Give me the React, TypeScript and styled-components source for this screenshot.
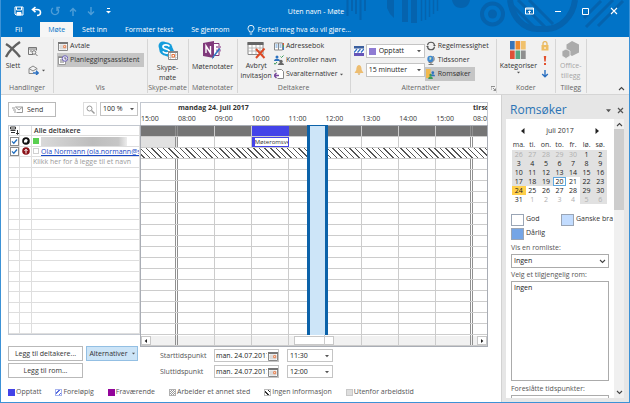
import React from "react";
import styled, { createGlobalStyle, css } from "styled-components";

const BLUE = "#0173c7";
const DARK = "#0563ae";
const LINE = "#cccccc";
const HATCH =
  "repeating-linear-gradient(45deg, #ffffff 0 2px, #555555 2px 3px, #ffffff 3px 4px)";

const GlobalStyle = createGlobalStyle`
  * { box-sizing: border-box; }
  body { margin: 0; font: 7px/10px "Open Sans", "Noto Sans", sans-serif; color: #333333; background: #ffffff; }
  button, input, select { font: inherit; color: inherit; margin: 0; padding: 0; border: 0; background: none; border-radius: 0; }
  button { white-space: nowrap; }
  svg { display: block; flex: none; }
`;

const Window = styled.div`
  display: flex;
  flex-direction: column;
  height: 100vh;
  overflow: hidden;
  border: solid #3d92d6;
  border-width: 0 1px 1px;
`;

/* ---------- title bar and tabs ---------- */

const Banner = styled.header`
  position: relative;
  flex: none;
  background: ${BLUE};
  color: #ffffff;
`;
const Pattern = styled.svg`
  position: absolute;
  top: 0;
  right: 0;
`;
const TitleBar = styled.div`
  position: relative;
  display: grid;
  grid-template-columns: 1fr auto 1fr;
  align-items: center;
  height: 22px;
  padding: 0 10px 0 12px;
`;
const QuickAccess = styled.div`
  display: flex;
  gap: 7px;
`;
const Caption = styled.h1`
  margin: 2px 0 0;
  font-size: 7px;
  font-weight: 400;
  line-height: 20px;
`;
const WindowButtons = styled.div`
  display: flex;
  justify-content: flex-end;
  gap: 17px;
`;
const BarButton = styled.button<{ $dim?: boolean }>`
  display: grid;
  place-items: center;
  width: 11px;
  height: 12px;
  opacity: ${(p) => (p.$dim ? 0.3 : 1)};
`;
const TabRow = styled.nav`
  position: relative;
  display: flex;
  height: 15px;
  padding-left: 5px;
`;
const Tab = styled.button<{ $active?: boolean }>`
  padding: 0 9px;
  line-height: 14px;
  ${(p) => p.$active && css`background: #f6f6f6; color: ${BLUE}; margin-left: 9px; padding: 0 8px;`}
`;
const TellMe = styled.button`
  display: flex;
  align-items: center;
  gap: 3px;
  margin-left: 8px;
`;

/* ---------- ribbon ---------- */

const Ribbon = styled.div`
  display: flex;
  flex: none;
  height: 58px;
  padding: 2px 0 0;
  background: #f1f1f1;
  border-bottom: 1px solid #d5d5d5;
`;
const Group = styled.section<{ $w: number }>`
  display: flex;
  flex-direction: column;
  flex: 0 0 ${(p) => p.$w}px;
  margin-bottom: 1px;
  border-right: 1px solid #d6d6d6;
`;
const GroupBody = styled.div<{ $gap?: number; $center?: boolean }>`
  display: flex;
  flex: 1;
  min-height: 0;
  gap: ${(p) => p.$gap ?? 0}px;
  justify-content: ${(p) => (p.$center ? "center" : "flex-start")};
  padding: 0 3px;
`;
const GroupName = styled.h2`
  display: flex;
  justify-content: center;
  margin: 0;
  font-size: 7px;
  font-weight: 400;
  line-height: 10px;
  color: #666666;
  white-space: nowrap;
`;
const GroupTitle = styled.span`
  flex: 1;
  text-align: center;
`;
const Stack = styled.div<{ $gap?: number; $top?: number }>`
  display: flex;
  flex-direction: column;
  align-items: flex-start;
  gap: ${(p) => p.$gap ?? 0}px;
  padding-top: ${(p) => p.$top ?? 0}px;
`;
const BigButton = styled.button<{ $dim?: boolean }>`
  display: flex;
  flex-direction: column;
  align-items: center;
  align-self: flex-start;
  padding-top: 2px;
  color: ${(p) => (p.$dim ? "#a6a6a6" : "#333333")};
  svg { margin-bottom: 2px; }
`;
const SmallButton = styled.button<{ $on?: boolean }>`
  display: flex;
  align-items: center;
  gap: 2px;
  height: 14px;
  padding: 0 4px 0 1px;
  background: ${(p) => (p.$on ? "#c5c5c5" : "transparent")};
`;
const IconButton = styled.button`
  display: flex;
  align-items: center;
  gap: 3px;
  height: 14px;
`;
const Labeled = styled.label`
  display: flex;
  align-items: center;
  gap: 2px;
`;
const Field = styled.span<{ $w: number; $h?: number }>`
  display: flex;
  align-items: center;
  gap: 3px;
  width: ${(p) => p.$w}px;
  height: ${(p) => p.$h ?? 14}px;
  padding: 0 3px 0 2px;
  background: #ffffff;
  border: 1px solid #c4c4c4;
  color: #222222;
`;
const DateField = styled(Field)`
  gap: 1px;
  padding: 0 0 0 1px;
`;
const Select = styled.select`
  flex: 1;
  min-width: 0;
  appearance: none;
  outline: 0;
`;
const Corner = styled.button`
  align-self: flex-end;
  margin: 0 4px 3px auto;
`;

/* ---------- body ---------- */

const Body = styled.main`
  display: flex;
  flex: 1;
  min-height: 0;
`;
const Planner = styled.section`
  display: flex;
  flex-direction: column;
  flex: 1;
  min-width: 0;
  padding: 7px 13px 5px 7px;
`;
const Schedule = styled.div`
  display: grid;
  grid-template-columns: 132px minmax(0, 1fr);
  grid-template-rows: 23px minmax(0, 1fr) 10px;
  flex: 1;
  min-height: 0;
`;
const Tools = styled.div`
  display: flex;
  align-items: flex-start;
  padding-right: 2px;
`;
const Button = styled.button<{ $w: number; $blue?: boolean }>`
  display: flex;
  align-items: center;
  justify-content: center;
  gap: 4px;
  width: ${(p) => p.$w}px;
  height: 15px;
  border: 1px solid ${(p) => (p.$blue ? "#93bfe3" : "#b9b9b9")};
  background: ${(p) => (p.$blue ? "#cce4f7" : "#ffffff")};
`;
const SendButton = styled(Button)`
  justify-content: flex-start;
  padding-left: 3px;
`;
const ZoomBox = styled.label`
  display: flex;
  gap: 3px;
  margin-left: auto;
`;
const Lens = styled.span`
  display: grid;
  place-items: center;
  width: 14px;
  height: 14px;
  border: 1px solid #dddddd;
`;
const Hours = styled.div`
  display: grid;
  grid-template-columns: 37fr repeat(8, 37fr) 14fr;
  grid-template-rows: 11px 11px;
  border: solid #c3c8d0;
  border-width: 1px 1px 0;
  overflow: hidden;
  white-space: nowrap;
  color: #333333;
`;
const Day = styled.strong<{ $from: number }>`
  grid-row: 1;
  grid-column: ${(p) => p.$from} / span ${(p) => (p.$from === 2 ? 5 : 1)};
  min-width: 0;
`;
const Hour = styled.span<{ $col: number }>`
  grid-row: 2;
  grid-column: ${(p) => p.$col};
  min-width: 0;
`;

const rows = css`
  display: grid;
  grid-template-rows: repeat(20, minmax(0, 1fr));
  border-spacing: 0;
  tbody { display: contents; }
  tr { display: grid; min-height: 0; border-bottom: 1px solid ${LINE}; }
  td, th { padding: 0; border-right: 1px solid ${LINE}; overflow: hidden; font-weight: 400; text-align: left; }
`;
const People = styled.table`
  ${rows}
  border: 1px solid #c3c8d0;
  border-right: 0;
  tr { grid-template-columns: 11px 12px minmax(0, 1fr); border-color: #dedede; }
  td, th { display: flex; align-items: center; justify-content: center; border-color: #dedede; white-space: nowrap; line-height: 9px; }
`;
const NameCell = styled.td`
  && { justify-content: flex-start; gap: 2px; padding-left: 1px; color: #9a9a9a; }
  a { color: #1646c4; }
`;
const HeadCell = styled.th`
  && { justify-content: flex-start; padding-left: 2px; font-weight: 600; color: #333333; }
`;
const Check = styled.input`
  appearance: none;
  width: 9px;
  height: 9px;
  border: 1px solid #8a8a8a;
  background: #ffffff;
  &:checked { background: #ffffff url("data:image/svg+xml,%3Csvg xmlns='http://www.w3.org/2000/svg' viewBox='0 0 7 7'%3E%3Cpath d='M1 3.4 2.8 5.2 6 1.5' fill='none' stroke='%23216fc0' stroke-width='1.3'/%3E%3C/svg%3E"); }
`;
const Presence = styled.i<{ $on?: boolean }>`
  flex: none;
  width: 6px;
  height: 6px;
  border: 1px solid ${(p) => (p.$on ? "#59cf50" : "#d0d0d0")};
  background: ${(p) => (p.$on ? "#59cf50" : "#ffffff")};
`;
const Redacted = styled.i`
  width: 86px;
  height: 9px;
  background: linear-gradient(90deg, #d9d9d9, #bdbdbd 60%, #c6c6c6 90%, #ededed);
`;
const Timeline = styled.div`
  position: relative;
  display: grid;
`;
const Slots = styled.table`
  ${rows}
  border: 1px solid #a9adb5;
  tr { grid-template-columns: 37fr repeat(8, 37fr) 14fr; }
  td:nth-child(1), td:nth-child(9) { border-right: 3px double #909090; }
  td:last-child { border-right: 0; }
`;
const SlotRow = styled.tr<{ $kind: string }>`
  ${(p) => p.$kind === "sum" && css`td { background: #757575; border-color: #cccccc; }`}
  ${(p) => p.$kind === "off" && css`td:first-child { background: #e1e1e1; }`}
  ${(p) => p.$kind === "none" && css`background: ${HATCH}; && td { border-color: transparent; }`}
`;
const Busy = styled.td`
  && { background: #4343e8; border-color: #4343e8; }
`;
const Booking = styled.td`
  && {
    border: 1px solid #4343e8;
    border-left-width: 3px;
    font-size: 6px;
    line-height: 8px;
    white-space: nowrap;
  }
`;
const Proposal = styled.div`
  position: absolute;
  top: 0;
  bottom: 0;
  left: 48%;
  width: 6%;
  border: solid #0b62a9;
  border-width: 1px 3px 0;
  background: #cde5f8;
`;
const Scroll = styled.div`
  grid-column: 2;
  display: flex;
  align-items: stretch;
  justify-content: space-between;
  margin: 1px 1px 0;
  background: #f1f1f1;
`;
const ScrollButton = styled.button<{ $w?: number }>`
  display: grid;
  place-items: center;
  width: ${(p) => p.$w ?? 10}px;
  background: #ffffff;
  border: 1px solid #c8c8c8;
`;
const Controls = styled.form`
  display: flex;
  align-items: flex-start;
  gap: 22px;
  margin-top: 1px;
`;
const ButtonGrid = styled.div`
  display: grid;
  grid-template-columns: 75px 52px;
  gap: 2px 3px;
`;
const Times = styled.div`
  display: grid;
  grid-template-columns: 47px 66px 46px;
  gap: 3px 7px;
  align-items: center;
  padding-top: 3px;
  label { white-space: nowrap; color: #555555; }
`;
const DateInput = styled.input`
  flex: 1;
  min-width: 0;
  outline: 0;
`;
const Legend = styled.ul`
  display: flex;
  gap: 14px;
  margin: 9px 0 0;
  padding: 0;
  list-style: none;
  color: #555555;
`;
const LegendItem = styled.li`
  display: flex;
  align-items: center;
  gap: 1px;
  white-space: nowrap;
`;
const Key = styled.i<{ $fill: string; $edge: string }>`
  width: 7px;
  height: 7px;
  border: 1px solid ${(p) => p.$edge};
  background: ${(p) => p.$fill};
`;

/* ---------- room finder ---------- */

const Pane = styled.aside`
  display: flex;
  flex-direction: column;
  flex: 0 0 128px;
  min-width: 0;
  padding: 0 5px 4px 4px;
  background: #e6e6e6;
  border-left: 1px solid #d2d2d2;
`;
const PaneHead = styled.div`
  display: flex;
  align-items: center;
  gap: 6px;
  height: 24px;
  padding: 6px 0 0 4px;
`;
const PaneTitle = styled.h2`
  flex: 1;
  margin: 0;
  font-size: 12px;
  font-weight: 400;
  line-height: 18px;
  color: #2b74b5;
`;
const PaneBody = styled.div`
  display: flex;
  flex: 1;
  min-height: 0;
  background: #ffffff;
`;
const PaneContent = styled.div`
  flex: 1;
  min-width: 0;
  overflow: hidden;
  padding: 7px 5px 0;
`;
const VScroll = styled.div`
  display: flex;
  flex-direction: column;
  align-items: center;
  width: 10px;
  padding: 3px 0;
  background: #f0f0f0;
`;
const Thumb = styled.div`
  width: 10px;
  height: 81px;
  margin: 2px 0 auto;
  background: #cdcdcd;
`;
const Month = styled.div`
  display: flex;
  align-items: center;
  justify-content: space-between;
  padding: 0 9px;
  color: #333333;
`;
const Calendar = styled.table`
  width: 95px;
  margin: 4px 0 0 1px;
  table-layout: fixed;
  border-collapse: collapse;
  color: #333333;
  text-align: center;
  th { padding: 0; font-weight: 400; line-height: 10px; }
`;
const Date = styled.td<{ $shade?: boolean; $dim?: boolean; $today?: boolean; $picked?: boolean }>`
  height: 9px;
  padding: 0;
  line-height: 9px;
  background: ${(p) => (p.$picked ? "#ffcf4a" : p.$shade ? "#e1e1e1" : "#ffffff")};
  color: ${(p) => (p.$dim ? "#b0b0b0" : "#222222")};
  outline: ${(p) => (p.$today ? "1px solid #5fa8e0" : "0")};
  outline-offset: -1px;
`;
const Quality = styled.div`
  display: grid;
  grid-template-columns: 50px 1fr;
  gap: 2px 0;
  margin: 10px 0 3px;
`;
const QualityItem = styled.span<{ $color: string }>`
  display: flex;
  gap: 2px;
  white-space: nowrap;
  &::before {
    content: "";
    width: 11px;
    height: 10px;
    border: 1px solid #9aa5b5;
    background: ${(p) => p.$color};
  }
`;
const PaneLabel = styled.label`
  display: block;
  margin-bottom: 1px;
  white-space: nowrap;
  color: #555555;
`;
const Combo = styled.span`
  display: flex;
  align-items: center;
  height: 14px;
  width: 98px;
  margin-bottom: 2px;
  padding: 0 2px;
  border: 1px solid #ababab;
  color: #222222;
`;
const RoomList = styled.select`
  display: block;
  width: 98px;
  height: 100px;
  margin-bottom: 3px;
  padding: 1px 2px;
  border: 1px solid #ababab;
  outline: 0;
  overflow: hidden;
  option { padding: 0; color: #222222; min-height: 10px; }
`;
const Suggestions = styled.div`
  width: 98px;
  height: 30px;
  border: 1px solid #ababab;
`;

/* ---------- icons ---------- */

const Caret = ({ size = 4, color = "#555" }) => (
  <svg width={size} height={size} viewBox="0 0 4 4"><path d="M0 1h4L2 3.3z" fill={color} /></svg>
);
const Chevron = ({ up = false }) => (
  <svg width="7" height="5" viewBox="0 0 7 5"><path d={up ? "M1 4l2.5-2.5L6 4" : "M1 1l2.5 2.5L6 1"} fill="none" stroke="#444" strokeWidth="1.1" /></svg>
);
const Arrow = ({ left = false, size = 6 }) => (
  <svg width={size} height={size} viewBox="0 0 6 6"><path d={left ? "M4.5 0v6L1 3z" : "M1.5 0v6L5 3z"} fill="#222" /></svg>
);
const CalendarIcon = ({ size = 10 }) => (
  <svg width={size} height={size} viewBox="0 0 10 10">
    <path d="M.5 1.5h9v8h-9z" fill="#fff" stroke="#888" /><path d="M0 1h10v2H0z" fill="#777" />
    <path d="M1 5h8M1 7h8M3 3v6M5 3v6M7 3v6" stroke="#bbb" strokeWidth=".6" />
    <path d="M5.700 4.700h2v2h-2z" fill="#fff" stroke="#e8743b" strokeWidth=".9" />
  </svg>
);

const quick = [
  <svg width="10" height="10" viewBox="0 0 10 10" fill="none" stroke="#fff"><path d="M1 1h8v8H2L1 8zM2.500 1v3h5V1" /><path d="M3 6.500h4V9H3z" fill="#fff" /></svg>,
  <svg width="11" height="11" viewBox="0 0 11 11" fill="none" stroke="#fff" strokeWidth="1.6"><path d="M4.500 1L1.500 3.500l3 2.700M1.500 3.500H6c2.500 0 3.500 1.500 3.500 3S8.500 9.500 6 9.500" /></svg>,
  <svg width="10" height="10" viewBox="0 0 10 10" fill="none" stroke="#fff" strokeWidth="1.400"><path d="M7 2a3.600 3.600 0 1 1-4 0M7 5V1.500h3" /></svg>,
  <svg width="8" height="9" viewBox="0 0 8 9" fill="none" stroke="#fff" strokeWidth="1.400"><path d="M4 9V1.500M1 4.500l3-3 3 3" /></svg>,
  <svg width="8" height="9" viewBox="0 0 8 9" fill="none" stroke="#fff" strokeWidth="1.400"><path d="M4 0v7.500M1 4.500l3 3 3-3" /></svg>,
  <svg width="5" height="6" viewBox="0 0 5 6"><path d="M1 .5h3" stroke="#fff" /><path d="M0 3h5L2.500 5.500z" fill="#fff" /></svg>,
];
const quickNames = ["Lagre", "Angre", "Gjør om", "Forrige", "Neste", "Tilpass"];
const winNames = ["Visningsalternativer for båndet", "Minimer", "Maksimer", "Lukk"];
const win = [
  <svg width="9" height="8" viewBox="0 0 9 8" fill="none" stroke="#fff"><path d="M.5 1h8v6h-8zM1 2h7M4.500 7V4M3 5.200L4.500 3.700 6 5.200" /></svg>,
  <svg width="8" height="8" viewBox="0 0 8 8"><path d="M1 4.500h6" stroke="#fff" /></svg>,
  <svg width="8" height="8" viewBox="0 0 8 8"><path d="M.5 1.500h6v6h-6z" fill="none" stroke="#fff" /></svg>,
  <svg width="8" height="8" viewBox="0 0 8 8"><path d="M1 1l6 6M7 1L1 7" stroke="#fff" strokeWidth="1.100" /></svg>,
];

const BannerPattern = () => (
  <Pattern width="290" height="37" viewBox="0 0 290 37" fill="none" stroke={DARK} aria-hidden="true">
    <path d="M8.500 0v16M13 0v11M17 0v14M21.500 0v20M26 0v11" strokeWidth="2" />
    <path d="M48 0h7v18l-4-4-3-6zM63 0h6v22h-6zM72 0h6v23h-6z" fill={DARK} stroke="none" />
    <path d="M82.500 0v21M86.500 0v20M90.500 0v17M94.500 0v14M98.500 0v11" strokeWidth="1.500" />
    <path d="M113 0h18c-1 5-4 8-9 8s-8-3-9-8z" fill={DARK} stroke="none" />
    <circle cx="153.500" cy="14" r="10.500" strokeWidth="4" /><circle cx="153.500" cy="14" r="4.500" fill={DARK} stroke="none" />
    <path d="M171 0c2 16 12 29 28 29h8c14 0 27-12 29-29" strokeWidth="6" />
    <path d="M171 3l28 28M179 0l31 31M190 0l24 24" strokeWidth="3" />
    <path d="M245 18L262 1M247 27L274 0M259 26L284 1" strokeWidth="3" />
  </Pattern>
);

const DeleteIcon = () => <svg width="18" height="18" viewBox="0 0 18 18"><path d="M2 3c5 3 10 8 14 13M16 1C10 5 5 10 2 16" fill="none" stroke="#606060" strokeWidth="2.400" /></svg>;
const FindIcon = () => <svg width="10" height="9" viewBox="0 0 10 9" fill="none" stroke="#777"><path d="M5 7.500H.5v-7h8v3M.5 2h8M2 4h2" /><circle cx="6" cy="5.500" r="1.800" /><path d="M7.500 7L9.500 9" /></svg>;
const ForwardIcon = () => <svg width="11" height="10" viewBox="0 0 11 10" fill="none" stroke="#888"><path d="M1 3.500L5 1l4 2.500M1 3.500v5h4M1 3.500l4 2.500 4-2.500v1" /><path d="M5 8h5M8 5.700L10.300 8 8 10" stroke="#2a6fc0" strokeWidth="1.300" /></svg>;
const AssistantIcon = () => <svg width="10" height="10" viewBox="0 0 10 10"><path d="M.5 2.500h7v7h-7z" fill="#fff" stroke="#999" /><path d="M0 2h6M2 5h3M2 7h4" stroke="#777" /><circle cx="7" cy="3.500" r="2.800" fill="#e4e0f8" stroke="#7268b8" /><path d="M7 2v2h1.500" fill="none" stroke="#444" strokeWidth=".7" /></svg>;
const SkypeIcon = () => (
  <svg width="20" height="20" viewBox="0 0 20 20">
    <circle cx="5" cy="5" r="4.500" fill="#159ddc" /><circle cx="11" cy="11" r="5" fill="#159ddc" /><circle cx="8" cy="8" r="6.800" fill="#159ddc" />
    <path d="M11.500 5.500C10 3.300 5 3.500 5 5.800c0 2.900 6.300 1.500 6.300 4.400 0 2.500-5 2.500-6.500.2" fill="none" stroke="#fff" strokeWidth="1.700" />
    <path d="M10.500 10.500h9v8h-9z" fill="#fff" stroke="#888" /><path d="M10 10h10v2H10z" fill="#888" /><path d="M11 14h8M11 16.500h8M12.500 12v6M17.500 12v6" stroke="#bbb" strokeWidth=".7" /><path d="M14 13.500h2.500V16H14z" fill="#fff" stroke="#e8743b" />
  </svg>
);
const NotesIcon = () => (
  <svg width="19" height="19" viewBox="0 0 19 19">
    <path d="M9 2.500h7v12H9" fill="#fff" stroke="#80397b" /><path d="M13 5h5v2h-5zM13 8.500h5v2h-5z" fill="#b98ab6" /><path d="M0 2l11-2v17L0 15z" fill="#80397b" />
    <path d="M3 12V5l4.500 7V5" fill="none" stroke="#fff" strokeWidth="1.400" /><path d="M17.500 8L11 16l-2 2.500.6-3L16 7z" fill="#2f78c4" />
  </svg>
);
const CancelIcon = () => (
  <svg width="19" height="18" viewBox="0 0 19 18">
    <path d="M1 1.500h15v12H1z" fill="#fff" stroke="#888" /><path d="M.5 1h16v3H.5z" fill="#666" /><path d="M1 7h15M1 10h15M5 4v9M9 4v9M13 4v9" stroke="#aaa" strokeWidth=".8" />
    <path d="M9 8l8.500 9M17.500 7.500L9 17" stroke="#dc4a26" strokeWidth="2" />
  </svg>
);
const BookIcon = () => <svg width="10" height="9" viewBox="0 0 10 9"><path d="M.5 1h4v7h-4zM4.500 1h4v7h-4z" fill="#fff" stroke="#888" /><path d="M1.500 3h2M1.500 5h2M5.500 3h2M5.500 5h2" stroke="#4a8ed2" /><path d="M9.500 1v2" stroke="#e05a33" /><path d="M9.500 3v2" stroke="#4aa564" /><path d="M9.500 5v3" stroke="#357ac8" /></svg>;
const NamesIcon = () => <svg width="10" height="10" viewBox="0 0 10 10"><circle cx="3" cy="2" r="1.500" fill="#2c72c0" /><path d="M0 6c0-3 6-3 6 0z" fill="#2c72c0" /><circle cx="7" cy="6.500" r="1.700" fill="#666" /><path d="M4 10c0-3 6-3 6 0z" fill="#666" /><path d="M6.500 1.500l1 1 2-2M0 8l1 1.300L3 7" fill="none" stroke="#3a9a57" /></svg>;
const ReplyIcon = () => <svg width="10" height="10" viewBox="0 0 10 10"><path d="M3.500.5h4l2 2v7h-6" fill="#fff" stroke="#888" /><path d="M0 6.500h5M2.500 4L0 6.500 2.500 9" fill="none" stroke="#77489b" strokeWidth="1.300" /><path d="M1 1v2" stroke="#777" /></svg>;
const BusyIcon = () => <svg width="10" height="10" viewBox="0 0 10 10"><path d="M0 0h10v2.500H0z" fill="#3b5f9e" /><path d="M0 3h10v4H0z" fill="#fff" /><path d="M0 6.500L3 3M3.500 6.500l3-3.500M7 6.500L10 3" stroke="#3573c8" strokeWidth="1.200" /><path d="M0 7h10v3H0z" fill="#6554b8" /></svg>;
const BellIcon = () => <svg width="10" height="10" viewBox="0 0 10 10"><path d="M5 0c2.500.5 2.500 3 2.700 5L9.500 8h-9l1.800-3C2.500 3 2.500.5 5 0z" fill="#edbd70" /><path d="M3.500 8.500h3L5 10z" fill="#d39b45" /></svg>;
const RepeatIcon = () => <svg width="10" height="10" viewBox="0 0 10 10" fill="none" stroke="#555" strokeWidth="1.100"><path d="M1.500 4a3.600 3.600 0 0 1 7 0M8.500 6a3.600 3.600 0 0 1-7 0" /><path d="M7 4h3L8.500 5.500zM0 6h3L1.500 4.500z" fill="#555" stroke="none" /></svg>;
const GlobeIcon = () => <svg width="10" height="10" viewBox="0 0 10 10"><circle cx="4.500" cy="4" r="3.200" fill="#3f87cf" /><path d="M3.500 2l2 .5-.5 2-1.500.5z" fill="#cfe4ba" /><path d="M7 1c2 2 1.500 5.500-1.500 6.500-1 .3-2 .2-3-.3M5 8v1.500M2.500 9.500h5" fill="none" stroke="#777" /></svg>;
const RoomIcon = () => <svg width="10" height="10" viewBox="0 0 11 11"><path d="M0 0h5v10H0z" fill="#f1b94d" /><circle cx="7.500" cy="4" r="1.500" fill="#2c72c0" /><path d="M5 8c0-3 5-3 5 0z" fill="#2c72c0" /><circle cx="5" cy="6.500" r="1.300" fill="#3a9a57" /><path d="M2.500 11c0-4 5-4 5 0z" fill="#3a9a57" /></svg>;
const CategoryIcon = () => (
  <svg width="16" height="18" viewBox="0 0 16 18">
    <path d="M0 0h4.700v8.500H0z" fill="#3674b9" /><path d="M5.500 0h4.700v8.500H5.500z" fill="#ee8a2e" /><path d="M11 0h4.700v8.500H11z" fill="#f1c16c" />
    <path d="M0 9.500h4.700V18H0z" fill="#de5237" /><path d="M5.500 9.500h4.700V18H5.500z" fill="#57a784" /><path d="M11 9.500h4.700V18H11z" fill="#8f8f8f" />
  </svg>
);
const LockIcon = () => <svg width="8" height="10" viewBox="0 0 8 10"><path d="M2 5V2.500C2 0 6 0 6 2.500V5" fill="none" stroke="#e6b65e" strokeWidth="1.300" /><path d="M.5 4h7v5.500h-7z" fill="#eebd62" /><path d="M4 6v2" stroke="#fff" /></svg>;
const ImportantIcon = () => <svg width="8" height="9" viewBox="0 0 8 9"><path d="M2.800 0h2.400L4.700 5.500H3.300zM3 7h2v2H3z" fill="#e2502d" /></svg>;
const LowIcon = () => <svg width="8" height="8" viewBox="0 0 8 8"><path d="M4 0v6.500M1.200 4L4 6.800 6.800 4" fill="none" stroke="#2a6fc0" strokeWidth="1.400" /></svg>;
const AddinIcon = () => <svg width="18" height="18" viewBox="0 0 18 18" fill="#ababab"><path d="M10 0l7 3.500v8L10 15l-5.500-3V3.500z" /><path d="M4 8l4 2v5l-4 2.500L0 15v-5z" stroke="#f1f1f1" strokeWidth=".8" /></svg>;
const BulbIcon = () => <svg width="8" height="10" viewBox="0 0 8 10" fill="none" stroke="#fff" strokeWidth=".9"><path d="M2.500 7C2.500 5.500 1 5 1 3.300a3 3 0 0 1 6 0C7 5 5.500 5.500 5.500 7zM2.800 9h2.400" /></svg>;
const SendIcon = () => <svg width="11" height="8" viewBox="0 0 11 8" fill="none" stroke="#999"><path d="M3.500 1h7v5.500h-6M3.500 1L7 4l3.500-3M0 2h3M1 4h3M2 6h2" /></svg>;
const LensIcon = () => <svg width="9" height="9" viewBox="0 0 9 9" fill="none" stroke="#999"><circle cx="3.500" cy="3.500" r="2.500" /><path d="M5.500 5.500L8.500 8.500" strokeWidth="1.400" /></svg>;
const ListIcon = () => <svg width="9" height="9" viewBox="0 0 9 9" fill="none" stroke="#333"><path d="M.5 1h5v2h-5zM.5 4.500h5M1 6.500h4M7.500 4v4M6 7l1.500 1.500L9 7" /></svg>;
const OrganizerIcon = () => <svg width="8" height="8" viewBox="0 0 8 8"><circle cx="4" cy="4" r="3.800" fill="#111" /><circle cx="4" cy="3.500" r="1.600" fill="#fff" /><path d="M2 3.500h3v2H2z" fill="#fff" /></svg>;
const RequiredIcon = () => <svg width="8" height="8" viewBox="0 0 8 8"><circle cx="4" cy="4" r="3.800" fill="#8c1219" /><path d="M4 6.500v-4M2.500 4L4 2.200 5.500 4" fill="none" stroke="#fff" /></svg>;
const CloseIcon = () => <svg width="7" height="7" viewBox="0 0 7 7"><path d="M1 1l5 5M6 1L1 6" stroke="#555" strokeWidth="1.200" /></svg>;
const LauncherIcon = () => <svg width="5" height="5" viewBox="0 0 5 5" fill="none" stroke="#777" strokeWidth=".8"><path d="M0 4V.5h4M2 2l2.500 2.500M4.500 2.500v2h-2" /></svg>;

/* ---------- data ---------- */

const hours = ["15:00", "08:00", "09:00", "10:00", "11:00", "12:00", "13:00", "14:00", "15:00", "08:00"];
const weeks = [
  [26, 27, 28, 29, 30, 1, 2],
  [3, 4, 5, 6, 7, 8, 9],
  [10, 11, 12, 13, 14, 15, 16],
  [17, 18, 19, 20, 21, 22, 23],
  [24, 25, 26, 27, 28, 29, 30],
  [31, 1, 2, 3, 4, 5, 6],
];
const legend = [
  ["Opptatt", "#4343e8", "#4343e8"],
  ["Foreløpig", "repeating-linear-gradient(135deg, #fff 0 2px, #5a6ee0 2px 3px)", "#a8b4ee"],
  ["Fraværende", "#93059b", "#93059b"],
  ["Arbeider et annet sted", "repeating-conic-gradient(#999 0 25%, #fff 0 50%) 0 0 / 2px 2px", "#b0b0b0"],
  ["Ingen informasjon", "repeating-linear-gradient(45deg, #fff 0 2px, #333 2px 3px)", "#bbbbbb"],
  ["Utenfor arbeidstid", "#dedede", "#c8c8c8"],
];
const kinds = ["sum", "off", "none"];

export default function App() {
  return (
    <>
      <GlobalStyle />
      <Window>
        <Banner>
          <BannerPattern />
          <TitleBar>
            <QuickAccess>
              {quick.map((icon, i) => (
                <BarButton key={i} aria-label={quickNames[i]} $dim={i > 1 && i < 5}>{icon}</BarButton>
              ))}
            </QuickAccess>
            <Caption>Uten navn - Møte</Caption>
            <WindowButtons>
              {win.map((icon, i) => <BarButton key={i} aria-label={winNames[i]}>{icon}</BarButton>)}
            </WindowButtons>
          </TitleBar>
          <TabRow>
            <Tab>Fil</Tab>
            <Tab $active>Møte</Tab>
            <Tab>Sett inn</Tab>
            <Tab>Formater tekst</Tab>
            <Tab>Se gjennom</Tab>
            <TellMe><BulbIcon />Fortell meg hva du vil gjøre...</TellMe>
          </TabRow>
        </Banner>

        <Ribbon>
          <Group $w={53}>
            <GroupBody $gap={6}>
              <BigButton><DeleteIcon />Slett</BigButton>
              <Stack $gap={5} $top={5}>
                <IconButton aria-label="Kalender"><FindIcon /></IconButton>
                <IconButton aria-label="Videresend"><ForwardIcon /><Caret size={3} /></IconButton>
              </Stack>
            </GroupBody>
            <GroupName>Handlinger</GroupName>
          </Group>
          <Group $w={93}>
            <GroupBody>
              <Stack>
                <SmallButton><CalendarIcon />Avtale</SmallButton>
                <SmallButton $on><AssistantIcon />Planleggingsassistent</SmallButton>
              </Stack>
            </GroupBody>
            <GroupName>Vis</GroupName>
          </Group>
          <Group $w={41}>
            <GroupBody $center><BigButton><SkypeIcon />Skype-<br />møte</BigButton></GroupBody>
            <GroupName>Skype-møte</GroupName>
          </Group>
          <Group $w={49}>
            <GroupBody $center><BigButton><NotesIcon />Møtenotater</BigButton></GroupBody>
            <GroupName>Møtenotater</GroupName>
          </Group>
          <Group $w={113}>
            <GroupBody $gap={1}>
              <BigButton><CancelIcon />Avbryt<br />invitasjon</BigButton>
              <Stack>
                <SmallButton><BookIcon />Adressebok</SmallButton>
                <SmallButton><NamesIcon />Kontroller navn</SmallButton>
                <SmallButton><ReplyIcon />Svaralternativer<Caret size={3} /></SmallButton>
              </Stack>
            </GroupBody>
            <GroupName>Deltakere</GroupName>
          </Group>
          <Group $w={146}>
            <GroupBody>
              <Stack $gap={5} $top={5}>
                <Labeled aria-label="Vis som"><BusyIcon />
                  <Field $w={59}><Key $fill="#8f7bd3" $edge="#8f7bd3" /><Select><option>Opptatt</option></Select><Caret /></Field>
                </Labeled>
                <Labeled aria-label="Påminnelse"><BellIcon />
                  <Field $w={59}><Select><option>15 minutter</option></Select><Caret /></Field>
                </Labeled>
              </Stack>
              <Stack>
                <SmallButton><RepeatIcon />Regelmessighet</SmallButton>
                <SmallButton><GlobeIcon />Tidssoner</SmallButton>
                <SmallButton $on><RoomIcon />Romsøker</SmallButton>
              </Stack>
            </GroupBody>
            <GroupName><GroupTitle>Alternativer</GroupTitle><button aria-label="Flere alternativer"><LauncherIcon /></button></GroupName>
          </Group>
          <Group $w={59}>
            <GroupBody $gap={4}>
              <BigButton><CategoryIcon />Kategoriser<Caret size={3} /></BigButton>
              <Stack>
                <IconButton aria-label="Privat"><LockIcon /></IconButton>
                <IconButton aria-label="Høy viktighet"><ImportantIcon /></IconButton>
                <IconButton aria-label="Lav viktighet"><LowIcon /></IconButton>
              </Stack>
            </GroupBody>
            <GroupName>Koder</GroupName>
          </Group>
          <Group $w={31}>
            <GroupBody $center><BigButton $dim><AddinIcon />Office-<br />tillegg</BigButton></GroupBody>
            <GroupName>Tillegg</GroupName>
          </Group>
          <Corner aria-label="Skjul båndet"><Chevron up /></Corner>
        </Ribbon>

        <Body>
          <Planner>
            <Schedule>
              <Tools>
                <SendButton $w={48}><SendIcon />Send</SendButton>
                <ZoomBox aria-label="Zoom"><Lens><LensIcon /></Lens>
                  <Field $w={38}><Select><option>100 %</option></Select><Caret /></Field>
                </ZoomBox>
              </Tools>
              <Hours>
                <Day $from={2}>mandag 24. juli 2017</Day>
                <Day $from={10}>tirsd</Day>
                {hours.map((h, i) => <Hour key={i} $col={i + 1}>{h}</Hour>)}
              </Hours>
              <People>
                <tbody>
                  <tr><th><ListIcon /></th><th /><HeadCell>Alle deltakere</HeadCell></tr>
                  <tr>
                    <td><Check type="checkbox" defaultChecked aria-label="Organisator" /></td><td><OrganizerIcon /></td>
                    <NameCell><Presence $on /><Redacted /></NameCell>
                  </tr>
                  <tr>
                    <td><Check type="checkbox" defaultChecked aria-label="Ola Normann" /></td><td><RequiredIcon /></td>
                    <NameCell><Presence /><a href="#ola">Ola Normann (ola.normann@stola</a></NameCell>
                  </tr>
                  <tr><td /><td /><NameCell>Klikk her for å legge til et navn</NameCell></tr>
                  {Array.from({ length: 16 }, (_, i) => <tr key={i}><td /><td /><td /></tr>)}
                </tbody>
              </People>
              <Timeline>
                <Slots>
                  <tbody>
                    {Array.from({ length: 20 }, (_, r) => (
                      <SlotRow key={r} $kind={kinds[r] ?? ""}>
                        {hours.map((_h, c) =>
                          r === 0 && c === 3 ? <Busy key={c} /> :
                          r === 1 && c === 3 ? <Booking key={c}>Møteromsve</Booking> :
                          <td key={c} />
                        )}
                      </SlotRow>
                    ))}
                  </tbody>
                </Slots>
                <Proposal />
              </Timeline>
              <Scroll>
                <ScrollButton aria-label="Rull til venstre"><Arrow left size={4} /></ScrollButton>
                <ScrollButton $w={40} aria-label="Rullefelt" />
                <ScrollButton aria-label="Rull til høyre"><Arrow size={4} /></ScrollButton>
              </Scroll>
            </Schedule>

            <Controls onSubmit={(e) => e.preventDefault()}>
              <ButtonGrid>
                <Button type="button" $w={75}>Legg til deltakere...</Button>
                <Button type="button" $w={52} $blue>Alternativer<Caret size={3} /></Button>
                <Button type="button" $w={75}>Legg til rom...</Button>
              </ButtonGrid>
              <Times>
                {[["Starttidspunkt", "11:30"], ["Sluttidspunkt", "12:00"]].map(([name, time]) => (
                  <React.Fragment key={name}>
                    <label htmlFor={name}>{name}</label>
                    <DateField $w={65} $h={13}><DateInput id={name} defaultValue="man. 24.07.2017" /><button type="button" aria-label="Velg dato"><CalendarIcon /></button></DateField>
                    <Field $w={46} $h={13}><Select aria-label={name + " klokkeslett"}><option>{time}</option></Select><Caret /></Field>
                  </React.Fragment>
                ))}
              </Times>
            </Controls>
            <Legend>
              {legend.map(([name, fill, edge]) => <LegendItem key={name}><Key $fill={fill} $edge={edge} />{name}</LegendItem>)}
            </Legend>
          </Planner>

          <Pane>
            <PaneHead>
              <PaneTitle>Romsøker</PaneTitle>
              <button aria-label="Oppgaverutealternativer"><Caret size={5} /></button>
              <button aria-label="Lukk ruten"><CloseIcon /></button>
            </PaneHead>
            <PaneBody>
              <PaneContent>
                <Month>
                  <button aria-label="Forrige måned"><Arrow left /></button>juli 2017<button aria-label="Neste måned"><Arrow /></button>
                </Month>
                <Calendar>
                  <thead><tr>{["ma.", "ti.", "on.", "to.", "fr.", "lø.", "sø."].map((d) => <th key={d}>{d}</th>)}</tr></thead>
                  <tbody>
                    {weeks.map((week, w) => (
                      <tr key={w}>
                        {week.map((d, i) => (
                          <Date key={i} $shade={w < 3 || i > 4 || (w === 3 && i < 3)} $dim={(w === 0 && d > 20) || (w === 5 && d < 10)} $today={w === 3 && d === 20} $picked={w === 4 && d === 24}>{d}</Date>
                        ))}
                      </tr>
                    ))}
                  </tbody>
                </Calendar>
                <Quality>
                  <QualityItem $color="#ffffff">God</QualityItem>
                  <QualityItem $color="#c2dcff">Ganske bra</QualityItem>
                  <QualityItem $color="#75a5e6">Dårlig</QualityItem>
                </Quality>
                <PaneLabel htmlFor="roomlist">Vis en romliste:</PaneLabel>
                <Combo><Select id="roomlist"><option>Ingen</option></Select><Chevron /></Combo>
                <PaneLabel htmlFor="rooms">Velg et tilgjengelig rom:</PaneLabel>
                <RoomList id="rooms" size={8}><option>Ingen</option></RoomList>
                <PaneLabel as="div">Foreslåtte tidspunkter:</PaneLabel>
                <Suggestions />
              </PaneContent>
              <VScroll><Chevron up /><Thumb /><Chevron /></VScroll>
            </PaneBody>
          </Pane>
        </Body>
      </Window>
    </>
  );
}
